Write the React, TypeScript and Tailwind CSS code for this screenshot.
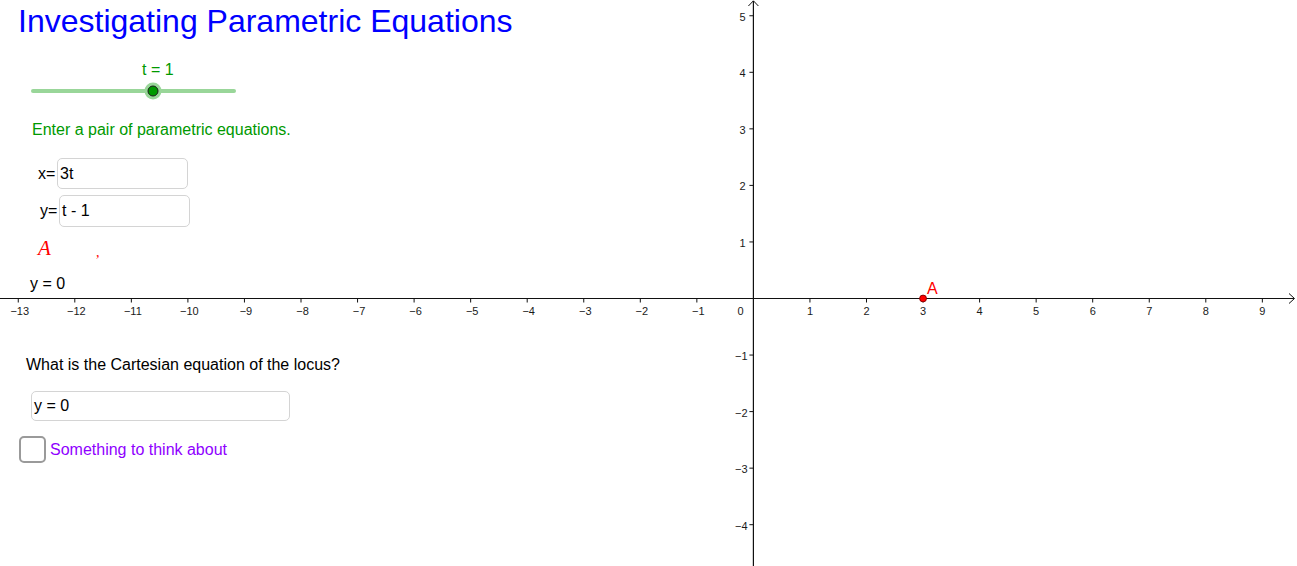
import React from 'react'

const U = 56.55
const OX = 753.4
const OY = 298.5
const SANS = "'Liberation Sans', Arial, sans-serif"

const xTicks = Array.from({ length: 23 }, (_, i) => i - 13).filter(n => n !== 0)
const yTicks = Array.from({ length: 10 }, (_, i) => i - 4).filter(n => n !== 0)

function fmt(n: number) {
  return n < 0 ? `\u2212${-n}` : `${n}`
}

function Graph() {
  return (
    <svg className="absolute inset-0" width={1297} height={566} viewBox="0 0 1297 566">
      {/* axes */}
      <line x1={0} y1={OY} x2={1294} y2={OY} stroke="#111" strokeWidth={1.2} />
      <line x1={OX} y1={1} x2={OX} y2={566} stroke="#111" strokeWidth={1.2} />
      <polyline points={`1289,${OY - 5} 1294.5,${OY} 1289,${OY + 5}`} fill="none" stroke="#111" strokeWidth={1} />
      <polyline points={`${OX - 5},6 ${OX},0.8 ${OX + 5},6`} fill="none" stroke="#111" strokeWidth={1} />

      {xTicks.map(n => {
        const x = OX + n * U
        return (
          <g key={`x${n}`}>
            <line x1={x} y1={OY} x2={x} y2={OY + 4} stroke="#111" strokeWidth={1} />
            <text x={n < 0 ? x + 1.5 : x} y={314.5} textAnchor="middle" fontSize={11} fill="#1a1a1a" fontFamily={SANS}>
              {fmt(n)}
            </text>
          </g>
        )
      })}
      {yTicks.map(n => {
        const y = OY - n * U
        return (
          <g key={`y${n}`}>
            <line x1={OX - 4} y1={y} x2={OX} y2={y} stroke="#111" strokeWidth={1} />
            <text x={n < 0 ? 747.5 : 745.5} y={y + 5} textAnchor="end" fontSize={11} fill="#1a1a1a" fontFamily={SANS}>
              {fmt(n)}
            </text>
          </g>
        )
      })}
      <text x={743.5} y={314.5} textAnchor="end" fontSize={11} fill="#1a1a1a" fontFamily={SANS}>0</text>

      {/* point A */}
      <circle cx={OX + 3 * U} cy={OY} r={3.4} fill="#ff0000" stroke="#8a0000" strokeWidth={1} />
      <text x={927} y={293.5} fontSize={16} fill="#ff0000" fontFamily={SANS}>A</text>
    </svg>
  )
}

function Slider() {
  return (
    <div className="flex h-[22px] items-center pl-[31px]">
      <div className="relative h-[4px] w-[205px] rounded-full bg-[#99d699]">
        <div className="absolute left-[122px] top-1/2 h-[17px] w-[17px] -translate-x-1/2 -translate-y-1/2 rounded-full bg-[#99d699]" />
        <div className="absolute left-[122px] top-1/2 h-[11px] w-[11px] -translate-x-1/2 -translate-y-1/2 rounded-full border border-[#1a1a1a] bg-[#009900]" />
      </div>
    </div>
  )
}

function Field({ value, width }: { value: string; width: string }) {
  return (
    <div className={`flex h-full items-center rounded-[5px] border border-[#d4d4d4] bg-white px-[2px] text-[16px] text-black ${width}`}>
      {value}
    </div>
  )
}

export default function App() {
  return (
    <div className="relative h-[566px] w-[1297px] overflow-hidden bg-white font-['Liberation_Sans',Arial,sans-serif]">
      <Graph />

      <div className="relative flex w-[560px] flex-col">
        <h1 className="h-[42px] whitespace-nowrap pl-[18px] text-[32px] leading-[42px] text-[#0000ff]">
          Investigating Parametric Equations
        </h1>

        <div className="mt-[18px] h-[20px] pl-[142px] text-[16px] leading-[20px] text-[#009900]">t = 1</div>
        <Slider />

        <p className="mt-[18px] h-[20px] whitespace-nowrap pl-[32px] text-[16px] leading-[20px] text-[#009900]">
          Enter a pair of parametric equations.
        </p>

        <div className="mt-[18px] flex h-[31px] items-center pl-[38px] text-[16px]">
          <span className="w-[19px]">x=</span>
          <Field value="3t" width="w-[131px]" />
        </div>
        <div className="mt-[6px] flex h-[32px] items-center pl-[40px] text-[16px]">
          <span className="w-[19px]">y=</span>
          <Field value="t - 1" width="w-[131px]" />
        </div>

        <div className="mt-[11px] flex h-[20px] items-center pl-[38px] font-['Liberation_Serif',serif] text-[#ff0000]">
          <span className="w-[58px] text-[21px] italic leading-[20px]">A</span>
          <span className="mt-[10px] text-[14px] leading-[14px]">,</span>
        </div>

        <div className="mt-[16px] h-[20px] pl-[30px] text-[16px] leading-[20px] text-black">y = 0</div>

        <p className="mt-[61px] h-[20px] whitespace-nowrap pl-[26px] text-[16px] leading-[20px] text-black">
          What is the Cartesian equation of the locus?
        </p>

        <div className="ml-[31px] mt-[16px] h-[30px]">
          <Field value="y = 0" width="w-[259px]" />
        </div>

        <label className="mt-[15px] flex h-[27px] items-center pl-[19px]">
          <span className="h-[27px] w-[27px] rounded-[5px] border-2 border-[#9a9a9a] bg-white" />
          <span className="ml-[4px] text-[16px] text-[#8f00ff]">Something to think about</span>
        </label>
      </div>
    </div>
  )
}
